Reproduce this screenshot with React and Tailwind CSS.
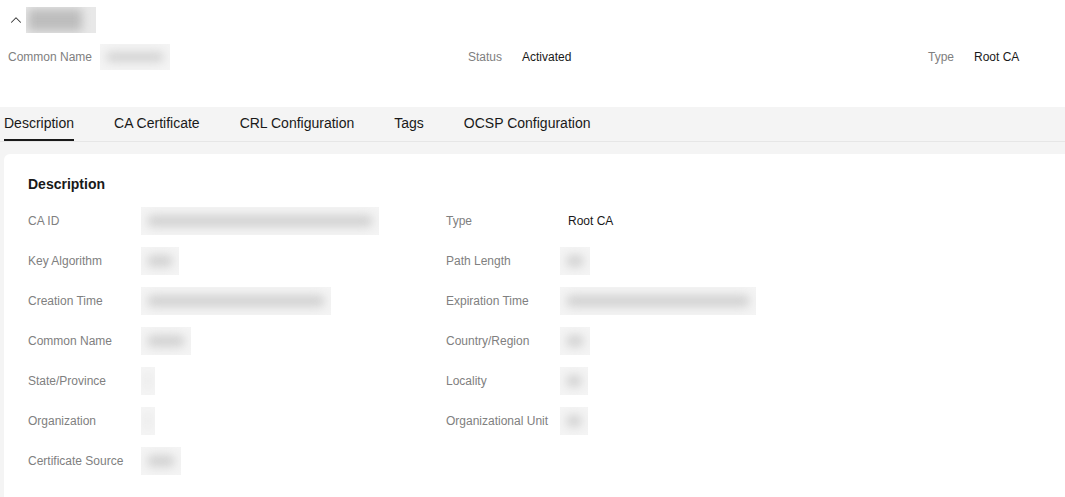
import { ChevronUp } from 'lucide-react'

function Blur({ w, h = 28 }){
  return (
    <div className="relative overflow-hidden bg-[#f4f4f4]" style={{ width: w, height: h }}>
      <div className="absolute inset-x-[6px] inset-y-[8px] rounded-full bg-[#d2d2d2] blur-[5px]" />
    </div>
  )
}

const left = [
  ['CA ID', 238],
  ['Key Algorithm', 38],
  ['Creation Time', 190],
  ['Common Name', 50],
  ['State/Province', 14],
  ['Organization', 14],
  ['Certificate Source', 40],
]
const right = [
  ['Type', 'Root CA'],
  ['Path Length', 30],
  ['Expiration Time', 196],
  ['Country/Region', 30],
  ['Locality', 28],
  ['Organizational Unit', 28],
]

function Row({ label, value, lw, offset = 0 }){
  return (
    <div className="flex items-center h-[40px]">
      <div className="text-[12px] text-[#808080] shrink-0" style={{ width: lw }}>{label}</div>
      {typeof value === 'string'
        ? <div className="text-[12px] text-[#191919]">{value}</div>
        : <div style={{ marginLeft: offset }}><Blur w={value} /></div>}
    </div>
  )
}

export default function App(){
  const tabs = ['Description', 'CA Certificate', 'CRL Configuration', 'Tags', 'OCSP Configuration']
  return (
    <div className="w-[1065px] h-[497px] overflow-hidden bg-[#f4f4f4]" style={{ fontFamily: '"Liberation Sans", Arial, sans-serif' }}>
      <div className="bg-white h-[107px]">
        <div className="flex items-center pt-[7px] pl-[7px] gap-[1px]">
          <ChevronUp size={18} strokeWidth={1.4} className="text-[#333]" />
          <div className="relative w-[70px] h-[26px] overflow-hidden bg-[#e8e8e8]">
            <div className="absolute inset-y-[2px] left-[2px] right-[14px] bg-[#bdbdbd] blur-[5px]" />
          </div>
        </div>
        <div className="flex items-center mt-[9px] h-[30px] text-[12px]">
          <div className="flex items-center w-[468px] pl-[8px]">
            <span className="text-[#808080]">Common Name</span>
            <div className="ml-[8px]"><Blur w={70} h={26} /></div>
          </div>
          <div className="flex items-center w-[460px]">
            <span className="text-[#808080] w-[54px]">Status</span>
            <span className="text-[#191919]">Activated</span>
          </div>
          <div className="flex items-center">
            <span className="text-[#808080] w-[46px]">Type</span>
            <span className="text-[#191919]">Root CA</span>
          </div>
        </div>
      </div>

      <div className="flex h-[35px] border-b border-[#e6e6e6] pl-[4px] gap-[40px]">
        {tabs.map((t, i) => (
          <div key={t} className={`flex items-center text-[14px] text-[#191919] ${i === 0 ? 'border-b-2 border-[#191919]' : 'border-b-2 border-transparent'}`}>
            {t}
          </div>
        ))}
      </div>

      <div className="ml-[4px] mt-[12px] bg-white rounded-tl-[6px] h-[400px] pl-[24px] pt-[20px]">
        <div className="text-[14px] font-bold text-[#191919] h-[20px] leading-[20px]">Description</div>
        <div className="flex mt-[7px]">
          <div className="w-[418px]">
            {left.map(([l, v]) => <Row key={l} label={l} value={v} lw={113} />)}
          </div>
          <div>
            {right.map(([l, v]) => <Row key={l} label={l} value={v} lw={122} offset={-8} />)}
          </div>
        </div>
      </div>
    </div>
  )
}
